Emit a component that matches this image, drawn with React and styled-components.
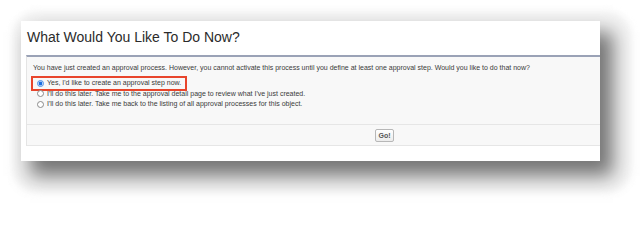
import React from 'react';
import styled, { createGlobalStyle } from 'styled-components';

const GlobalStyle = createGlobalStyle`
  html, body {
    margin: 0;
    padding: 0;
    background: #ffffff;
  }
  body {
    font-family: "Liberation Sans", Arial, sans-serif;
    color: #333;
  }
`;

const Page = styled.div`
  width: 642px;
  height: 203px;
  padding: 21px 0 0 21px;
  box-sizing: border-box;
  overflow: hidden;
`;

// soft rounded halo behind the screenshot card
const Frame = styled.div`
  position: relative;
  isolation: isolate;
  width: 579px;

  &::before {
    content: '';
    position: absolute;
    top: -10px;
    left: -9px;
    right: -32px;
    bottom: -32px;
    border-radius: 26px;
    background: #f3f3f3;
    filter: blur(3px);
    z-index: 0;
  }
`;

const Card = styled.div`
  position: relative;
  z-index: 1;
  height: 140px;
  background: #fff;
  box-shadow: 11px 13px 18px 2px rgba(0, 0, 0, 0.52);
  display: flex;
  flex-direction: column;
`;

const Title = styled.h1`
  margin: 0;
  height: 34px;
  padding: 8px 0 0 6px;
  box-sizing: border-box;
  font-size: 14px;
  font-weight: normal;
  line-height: 16px;
  color: #2b2b2b;
`;

const Section = styled.div`
  margin-left: 5px;
  border-top: 2px solid #9aa2b6;
  border-left: 1px solid #e4e4e4;
  background: #f8f8f8;
  display: flex;
  flex-direction: column;
`;

const Body = styled.div`
  height: 67px;
  padding: 6px 0 0 6px;
  box-sizing: border-box;
  font-size: 7px;
  color: #3a3a3a;
`;

const Intro = styled.p`
  margin: 0 0 6px;
  line-height: 9px;
`;

const Options = styled.div`
  display: flex;
  flex-direction: column;
`;

const Option = styled.label`
  display: flex;
  align-items: center;
  height: 10.5px;
  padding-left: 4px;
  outline: ${p => (p.$highlight ? '2px solid #e8452c' : 'none')};
  outline-offset: 0.5px;
  width: ${p => (p.$highlight ? '148px' : 'auto')};
  line-height: 10px;
`;

const Radio = styled.span`
  width: 7px;
  height: 7px;
  border-radius: 50%;
  box-sizing: border-box;
  margin-right: 3px;
  flex-shrink: 0;
  background: ${p => (p.$checked ? '#1a6fe0' : '#fff')};
  border: 1px solid ${p => (p.$checked ? '#6fa6ec' : '#8a8a8a')};
  box-shadow: ${p => (p.$checked ? 'inset 0 0 0 0.6px #fff' : 'none')};
`;

const ButtonRow = styled.div`
  height: 20px;
  border-top: 1px solid #e6e6e6;
  border-bottom: 1px solid #e6e6e6;
  display: flex;
  align-items: center;
  justify-content: center;
  padding-left: 142px;
`;

const GoButton = styled.button`
  height: 13px;
  width: 19px;
  padding: 0;
  font-family: "Liberation Sans", Arial, sans-serif;
  font-size: 7px;
  font-weight: bold;
  color: #555;
  border: 1px solid #b7b7b7;
  border-radius: 2px;
  background: linear-gradient(#ffffff, #ececec);
`;

const options = [
  { text: "Yes, I'd like to create an approval step now.", checked: true },
  { text: "I'll do this later. Take me to the approval detail page to review what I've just created." },
  { text: "I'll do this later. Take me back to the listing of all approval processes for this object." },
];

export default function App() {
  return (
    <>
      <GlobalStyle />
      <Page>
        <Frame>
          <Card>
            <Title>What Would You Like To Do Now?</Title>
            <Section>
              <Body>
                <Intro>
                  You have just created an approval process. However, you cannot activate this process
                  until you define at least one approval step. Would you like to do that now?
                </Intro>
                <Options>
                  {options.map(o => (
                    <Option key={o.text} $highlight={o.checked}>
                      <Radio $checked={o.checked} />
                      {o.text}
                    </Option>
                  ))}
                </Options>
              </Body>
              <ButtonRow>
                <GoButton>Go!</GoButton>
              </ButtonRow>
            </Section>
          </Card>
        </Frame>
      </Page>
    </>
  );
}
